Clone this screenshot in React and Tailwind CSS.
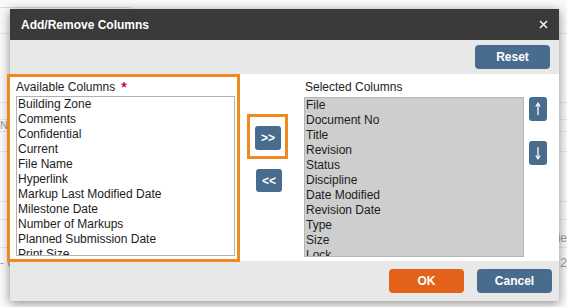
import React from "react";

const available = [
  "Building Zone",
  "Comments",
  "Confidential",
  "Current",
  "File Name",
  "Hyperlink",
  "Markup Last Modified Date",
  "Milestone Date",
  "Number of Markups",
  "Planned Submission Date",
  "Print Size",
];

const selected = [
  "File",
  "Document No",
  "Title",
  "Revision",
  "Status",
  "Discipline",
  "Date Modified",
  "Revision Date",
  "Type",
  "Size",
  "Lock",
];

const font = { fontFamily: '"Liberation Sans", Arial, sans-serif' };

const Arrow = ({ down }) => (
  <svg width="8" height="14" viewBox="0 0 8 14" className={down ? "rotate-180" : ""}>
    <path d="M4 1.5 V13" stroke="white" strokeWidth="1.3" />
    <path d="M1.8 4.5 L4 1.2 L6.2 4.5" stroke="white" strokeWidth="1.3" fill="none" />
  </svg>
);

const ListBox = ({ items, grey }) => (
  <div
    className={`h-[160px] overflow-hidden border ${
      grey ? "bg-[#cecece] border-[#b5b5b5]" : "bg-white border-[#b0b0b0]"
    } pl-[1px]`}
  >
    {items.map((item) => (
      <div key={item} className="text-[12px] leading-[15px] text-[#1c1c1c] whitespace-nowrap">
        {item}
      </div>
    ))}
  </div>
);

export default function App() {
  return (
    <div className="relative w-[567px] h-[307px] overflow-hidden bg-[#fafafa]" style={font}>
      {/* page behind the dialog */}
      <div className="flex flex-col">
        <div className="h-[7px]" />
        <div className="h-[15px] w-[131px] border-t border-r border-[#dcdcdc]" />
        <div className="h-[12px] border-b border-[#e6e6e6]" />
        <div className="h-[69px] border-b border-[#e6e6e6]" />
        <div className="h-[17px] border-b border-[#e6e6e6]" />
        <div className="h-[12px] border-b border-[#e6e6e6] flex items-center text-[11px] text-[#999]">N</div>
        <div className="h-[20px] border-b border-[#e6e6e6]" />
        <div className="h-[50px] border-b border-[#e6e6e6]" />
        <div className="h-[18px] border-b border-[#e6e6e6]" />
        <div className="h-[28px] border-b border-[#e6e6e6] flex items-end justify-end pr-[0px] text-[12px] text-[#999]">ie</div>
        <div className="h-[30px] flex items-center justify-between text-[12px] text-[#999]">
          <span>- C</span>
          <span>2</span>
        </div>
      </div>

      {/* dialog */}
      <div className="absolute left-[10px] top-[9px] w-[549px] h-[292px] flex flex-col shadow-[0_2px_10px_rgba(0,0,0,0.45)]">
        <div className="h-[31px] bg-[#3a3a3a] flex items-center justify-between pl-[11px] pr-[11px]">
          <span className="text-white text-[12px] font-bold">Add/Remove Columns</span>
          <svg width="9" height="9" viewBox="0 0 9 9">
            <path d="M1 1 L8 8 M8 1 L1 8" stroke="white" strokeWidth="1.4" />
          </svg>
        </div>

        <div className="h-[34px] bg-[#e8e8e8] flex justify-end pt-[5px] pr-[9px]">
          <button className="w-[75px] h-[24px] rounded-[4px] bg-[#486c8d] text-white text-[12px] font-bold">
            Reset
          </button>
        </div>

        <div className="h-[187px] bg-white flex">
          {/* available */}
          <div className="-ml-[3px] w-[233px] h-[188px] border-[3px] border-[#ef8a22] pl-[6px] pr-[2px] relative z-10">
            <div className="mt-[2px] h-[15px] flex items-center gap-[6px] text-[12px] text-[#222]">
              <span>Available Columns</span>
              <span className="text-[#c8102e] font-bold text-[14px] leading-none">*</span>
            </div>
            <div className="mt-[2px]">
              <ListBox items={available} />
            </div>
          </div>

          {/* move buttons */}
          <div className="w-[64px] flex flex-col">
            <div className="ml-[7px] mt-[40px] w-[41px] h-[45px] border-[3px] border-[#ef8a22] pl-[5px] pt-[8px]">
              <button className="w-[26px] h-[24px] rounded-[3px] bg-[#486c8d] text-white text-[12px] font-bold leading-none">
                &gt;&gt;
              </button>
            </div>
            <button className="ml-[16px] mt-[10px] w-[26px] h-[23px] rounded-[3px] bg-[#486c8d] text-white text-[12px] font-bold leading-none">
              &lt;&lt;
            </button>
          </div>

          {/* selected */}
          <div className="w-[220px] pt-[5px]">
            <div className="h-[15px] flex items-center pl-[1px] text-[12px] text-[#222]">Selected Columns</div>
            <div className="mt-[3px]">
              <ListBox items={selected} grey />
            </div>
          </div>

          <div className="ml-[5px] pt-[23px] flex flex-col gap-[20px]">
            <button className="w-[18px] h-[24px] rounded-[3px] bg-[#486c8d] flex items-center justify-center">
              <Arrow />
            </button>
            <button className="w-[18px] h-[24px] rounded-[3px] bg-[#486c8d] flex items-center justify-center">
              <Arrow down />
            </button>
          </div>
        </div>

        <div className="h-[40px] bg-[#e8e8e8] flex justify-end gap-[13px] pt-[8px] pr-[7px]">
          <button className="w-[75px] h-[24px] rounded-[4px] bg-[#e4611a] text-white text-[12px] font-bold">
            OK
          </button>
          <button className="w-[75px] h-[24px] rounded-[4px] bg-[#486c8d] text-white text-[12px] font-bold">
            Cancel
          </button>
        </div>
      </div>
    </div>
  );
}
